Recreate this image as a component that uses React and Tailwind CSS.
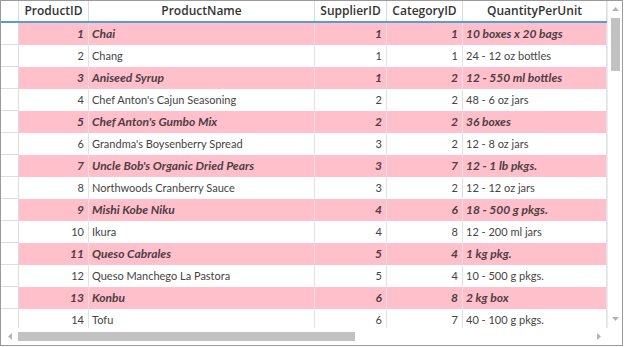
const columns = [
  { key: 'id', title: 'ProductID', width: 'w-[70px]', num: true },
  { key: 'name', title: 'ProductName', width: 'w-[226px]' },
  { key: 'supplier', title: 'SupplierID', width: 'w-[72px]', num: true },
  { key: 'category', title: 'CategoryID', width: 'w-[76px]', num: true },
  { key: 'qty', title: 'QuantityPerUnit', width: 'w-[144px]' },
];

const products = [
  { id: 1, name: 'Chai', supplier: 1, category: 1, qty: '10 boxes x 20 bags' },
  { id: 2, name: 'Chang', supplier: 1, category: 1, qty: '24 - 12 oz bottles' },
  { id: 3, name: 'Aniseed Syrup', supplier: 1, category: 2, qty: '12 - 550 ml bottles' },
  { id: 4, name: "Chef Anton's Cajun Seasoning", supplier: 2, category: 2, qty: '48 - 6 oz jars' },
  { id: 5, name: "Chef Anton's Gumbo Mix", supplier: 2, category: 2, qty: '36 boxes' },
  { id: 6, name: "Grandma's Boysenberry Spread", supplier: 3, category: 2, qty: '12 - 8 oz jars' },
  { id: 7, name: "Uncle Bob's Organic Dried Pears", supplier: 3, category: 7, qty: '12 - 1 lb pkgs.' },
  { id: 8, name: 'Northwoods Cranberry Sauce', supplier: 3, category: 2, qty: '12 - 12 oz jars' },
  { id: 9, name: 'Mishi Kobe Niku', supplier: 4, category: 6, qty: '18 - 500 g pkgs.' },
  { id: 10, name: 'Ikura', supplier: 4, category: 8, qty: '12 - 200 ml jars' },
  { id: 11, name: 'Queso Cabrales', supplier: 5, category: 4, qty: '1 kg pkg.' },
  { id: 12, name: 'Queso Manchego La Pastora', supplier: 5, category: 4, qty: '10 - 500 g pkgs.' },
  { id: 13, name: 'Konbu', supplier: 6, category: 8, qty: '2 kg box' },
  { id: 14, name: 'Tofu', supplier: 6, category: 7, qty: '40 - 100 g pkgs.' },
];

function Arrow({ dir }) {
  const pts = {
    up: '0,4 3.5,0 7,4',
    down: '0,0 3.5,4 7,0',
    left: '4,0 0,3.5 4,7',
    right: '0,0 4,3.5 0,7',
  }[dir];
  const vertical = dir === 'up' || dir === 'down';
  return (
    <svg width={vertical ? 7 : 4} height={vertical ? 4 : 7} viewBox={vertical ? '0 0 7 4' : '0 0 4 7'}>
      <polygon points={pts} fill="#b4b4b4" />
    </svg>
  );
}

export default function App() {
  return (
    <div className="w-[624px] h-[347px] bg-white">
      <div className="w-[623px] h-[346px] border border-[#9a9a9a] flex flex-col overflow-hidden">
        <div className="flex h-[327px]">
          <div className="w-[606px] overflow-hidden">
            {/* header */}
            <div className="flex h-[22px] border-b-2 border-[#5b9bd5] font-['Open_Sans',sans-serif]">
              <div className="w-[18px] shrink-0 border-r border-[#dcdcdc]" />
              {columns.map((c) => (
                <div
                  key={c.key}
                  className={`${c.width} shrink-0 border-r border-[#dcdcdc] flex items-center justify-center text-[12px] font-semibold text-[#333]`}>
                  {c.title}
                </div>
              ))}
            </div>
            {/* rows */}
            {products.map((p, i) => {
              const pink = i % 2 === 0;
              return (
                <div key={p.id} className="flex h-[22px] font-['Lato',sans-serif]">
                  <div className="w-[18px] shrink-0 border-r border-b border-[#dcdcdc] bg-white" />
                  {columns.map((c) => (
                    <div
                      key={c.key}
                      className={`${c.width} shrink-0 border-r border-[#e2e2e2] flex items-center whitespace-nowrap overflow-hidden ${
                        c.num ? 'justify-end pr-[4px]' : 'pl-[3px]'
                      } ${pink ? 'bg-[#ffc0cb] text-[12px] font-bold italic text-[#4e3d44]' : 'bg-white text-[11px] text-[#444]'}`}>
                      {p[c.key]}
                    </div>
                  ))}
                </div>
              );
            })}
          </div>
          {/* vertical scrollbar */}
          <div className="w-[15px] shrink-0 border-l border-[#ececec] flex flex-col items-center">
            <div className="h-[16px] flex items-center justify-center">
              <Arrow dir="up" />
            </div>
            <div className="flex-1 w-full px-[2px] pt-[1px]">
              <div className="w-[9px] h-[53px] mx-auto bg-[#c2c2c2]" />
            </div>
            <div className="h-[16px] flex items-center justify-center pb-[2px]">
              <Arrow dir="down" />
            </div>
          </div>
        </div>
        {/* horizontal scrollbar */}
        <div className="flex h-[17px]">
          <div className="w-[606px] flex items-center">
            <div className="w-[17px] flex items-center justify-center">
              <Arrow dir="left" />
            </div>
            <div className="w-[337px] h-[9px] bg-[#c2c2c2]" />
            <div className="flex-1" />
            <div className="w-[17px] flex items-center justify-center">
              <Arrow dir="right" />
            </div>
          </div>
          <div className="w-[15px]" />
        </div>
      </div>
    </div>
  );
}
